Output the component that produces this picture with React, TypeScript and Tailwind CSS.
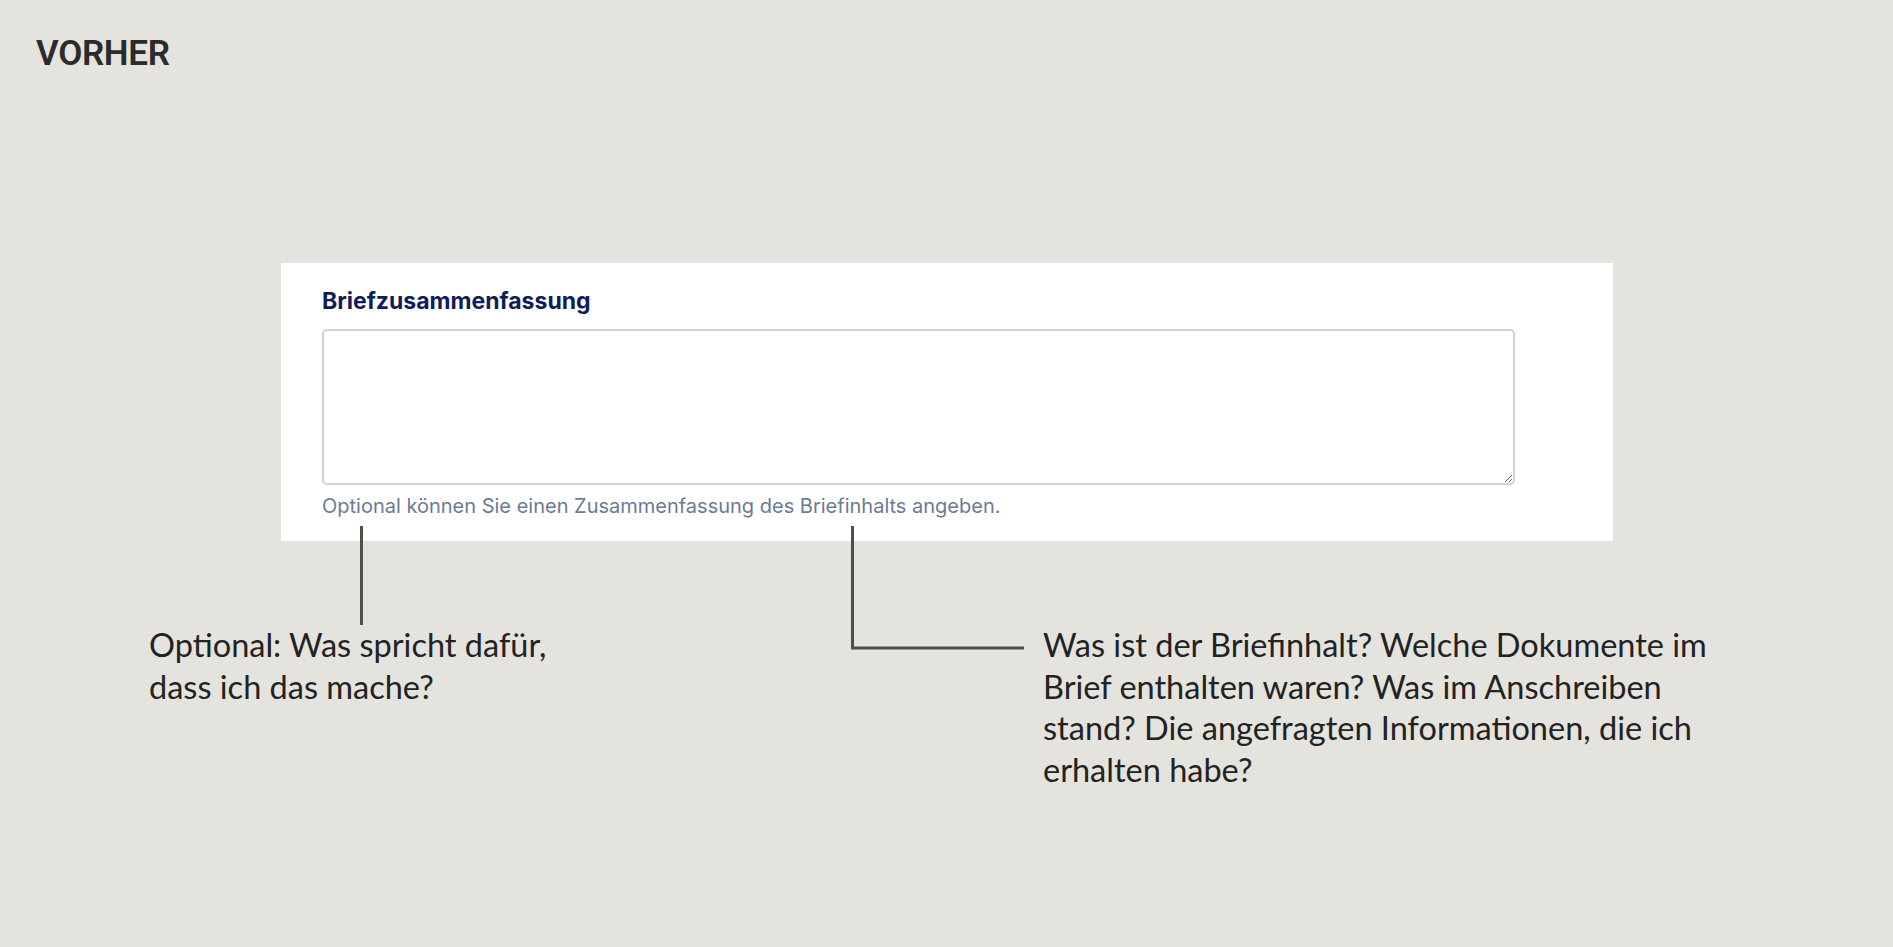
const Connectors = () => (
  <svg
    className="pointer-events-none absolute left-0 top-0"
    width="1893"
    height="947"
    viewBox="0 0 1893 947"
    fill="none"
  >
    <path d="M361.5 526 V625" stroke="#485247" strokeWidth="3" />
    <path d="M852.5 526 V648 H1024" stroke="#485247" strokeWidth="3" />
  </svg>
)

const App = () => {
  return (
    <div className="relative min-h-screen w-full bg-[#e4e3de]">
      <div className="pl-[36px] pt-[36px]">
        <h1 className="font-['Roboto',sans-serif] text-[35px] leading-[35px] font-semibold tracking-[-0.01em] text-[#2b2b2b]">
          VORHER
        </h1>
      </div>

      <div className="ml-[281px] mt-[192px] w-[1332px] bg-white pl-[41px] pt-[24px] pb-[23px]">
        <label
          htmlFor="summary"
          className="block font-['Inter',sans-serif] text-[23px] leading-[28px] font-bold text-[#0f1d5a]"
        >
          Briefzusammenfassung
        </label>
        <textarea
          id="summary"
          className="mt-[14px] block h-[156px] w-[1193px] rounded-[5px] border-2 border-[#cbd2de] bg-white outline-none"
        />
        <p className="mt-[9px] font-['Inter',sans-serif] text-[20px] leading-[24px] text-[#6c7b93]">
          Optional können Sie einen Zusammenfassung des Briefinhalts angeben.
        </p>
      </div>

      <div className="mt-[83px] flex font-['Lato',sans-serif] text-[32.5px] leading-[41.5px] text-[#222222]">
        <p className="ml-[149px] w-[430px]">
          Optional: Was spricht dafür,
          <br />
          dass ich das mache?
        </p>
        <p className="ml-[464px] w-[740px]">
          Was ist der Briefinhalt? Welche Dokumente im
          <br />
          Brief enthalten waren? Was im Anschreiben
          <br />
          stand? Die angefragten Informationen, die ich
          <br />
          erhalten habe?
        </p>
      </div>

      <Connectors />
    </div>
  )
}

export default App
